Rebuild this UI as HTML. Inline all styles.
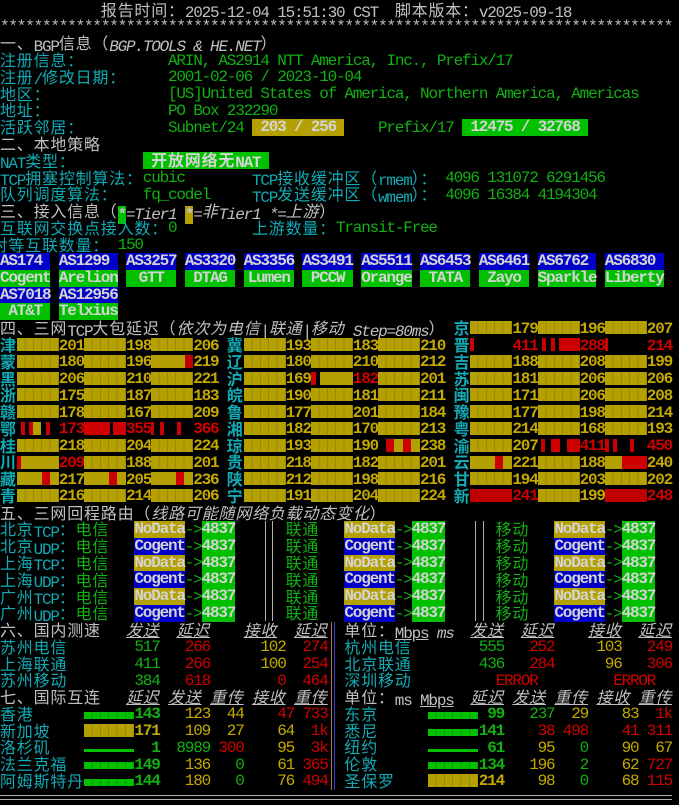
<!DOCTYPE html>
<html><head><meta charset="utf-8">
<style>
body{margin:0;background:#000;width:679px;height:805px;overflow:hidden;position:relative;font:16px/16.76px "Liberation Mono","Noto Sans CJK SC",monospace;letter-spacing:-1.2px;color:#c0c0c0}
i{position:absolute;font-style:normal;white-space:pre;left:calc(var(--c)*8.4px);top:calc(var(--r)*16.76px + 2.4px);height:16.76px;line-height:16.76px}
.k{font-family:"Noto Sans CJK SC","WenQuanYi Zen Hei",sans-serif;font-size:16px;letter-spacing:0.8px;line-height:16.76px}
span.k{position:relative;top:-1.5px}
i.k{position:absolute;top:calc(var(--r)*16.76px + 0.9px)}
.cy{color:#12aab4}.g{color:#12b012}.y{color:#c4aa00}.r{color:#d00000}.w{color:#c0c0c0}
.it{font-style:italic}
.b{font-weight:bold}
i.bx{font-weight:bold;color:#d4d4d4;text-align:center;width:calc(var(--w)*8.4px);top:calc(var(--r)*16.76px + 1.6px)}
.ol{background:#b4a000}.gn{background:#00c000}.bl{background:#0000c8}
i.bar{width:42px;height:13px;top:calc(var(--r)*16.76px + 3px)}
.yb{background:repeating-linear-gradient(90deg,#b4a000 0 7.4px,#9a8800 7.4px 8.4px)}
.rb{background:#c00000}
.gb{background:repeating-linear-gradient(90deg,#00c000 0 7.4px,#009a00 7.4px 8.4px)}
.ul{text-decoration:underline}
.vl{position:absolute;width:1px}
.n i{font-weight:bold}
</style></head><body>
<i style="--c:12;--r:0"><span class="k">报告时间：</span>2025-12-04 15:51:30 CST  <span class="k">脚本版本：</span>v2025-09-18</i>
<i style="--c:0;--r:1">********************************************************************************</i>
<i style="--c:0;--r:2"><span class="k">一、</span>BGP<span class="k">信息（</span><span class="it">BGP.TOOLS &amp; HE.NET</span><span class="k">）</span></i>
<i class="cy k" style="--c:0;--r:3">注册信息：</i><i class="g" style="--c:20;--r:3">ARIN, AS2914 NTT America, Inc., Prefix/17</i>
<i class="cy" style="--c:0;--r:4"><span class="k">注册</span>/<span class="k">修改日期：</span></i><i class="g" style="--c:20;--r:4">2001-02-06 / 2023-10-04</i>
<i class="cy k" style="--c:0;--r:5">地区：</i><i class="g" style="--c:20;--r:5">[US]United States of America, Northern America, Americas</i>
<i class="cy k" style="--c:0;--r:6">地址：</i><i class="g" style="--c:20;--r:6">PO Box 232290</i>
<i class="cy k" style="--c:0;--r:7">活跃邻居：</i><i class="g" style="--c:20;--r:7">Subnet/24</i>
<i class="bx ol" style="--c:30;--r:7;--w:11">203 / 256</i>
<i class="g" style="--c:45;--r:7">Prefix/17</i>
<i class="bx gn" style="--c:55;--r:7;--w:15">12475 / 32768</i>
<i class="k" style="--c:0;--r:8">二、本地策略</i>
<i class="cy" style="--c:0;--r:9">NAT<span class="k">类型：</span></i>
<i class="bx gn" style="--c:17;--r:9;--w:15"><span class="k">开放网络无</span>NAT</i>
<i class="cy" style="--c:0;--r:10">TCP<span class="k">拥塞控制算法：</span></i><i class="g" style="--c:17;--r:10">cubic</i>
<i class="cy" style="--c:30;--r:10">TCP<span class="k">接收缓冲区（</span>rmem<span class="k">）：</span></i><i class="g" style="--c:53;--r:10">4096 131072 6291456</i>
<i class="cy k" style="--c:0;--r:11">队列调度算法：</i><i class="g" style="--c:17;--r:11">fq_codel</i>
<i class="cy" style="--c:30;--r:11">TCP<span class="k">发送缓冲区（</span>wmem<span class="k">）：</span></i><i class="g" style="--c:53;--r:11">4096 16384 4194304</i>
<i style="--c:0;--r:12"><span class="k">三、接入信息（</span><span class="gn b">*</span><span class="it">=Tier1 </span><span class="ol b">*</span><span class="it">=<span class="k">非</span>Tier1 *=<span class="k">上游</span></span><span class="k">）</span></i>
<i class="cy k" style="--c:0;--r:13">互联网交换点接入数：</i><i class="g" style="--c:20;--r:13">0</i>
<i class="cy k" style="--c:30;--r:13">上游数量：</i><i class="g" style="--c:40;--r:13">Transit-Free</i>
<i class="cy k" style="--c:-1;--r:14">对等互联数量：</i><i class="g" style="--c:14;--r:14">150</i>

<i class="bx bl" style="--c:0;--r:15;--w:6;text-align:left">AS174</i><i class="bx gn" style="--c:0;--r:16;--w:6">Cogent</i>
<i class="bx bl" style="--c:7;--r:15;--w:7;text-align:left">AS1299</i><i class="bx gn" style="--c:7;--r:16;--w:7">Arelion</i>
<i class="bx bl" style="--c:15;--r:15;--w:6">AS3257</i><i class="bx gn" style="--c:15;--r:16;--w:6">GTT</i>
<i class="bx bl" style="--c:22;--r:15;--w:6">AS3320</i><i class="bx gn" style="--c:22;--r:16;--w:6">DTAG</i>
<i class="bx bl" style="--c:29;--r:15;--w:6">AS3356</i><i class="bx gn" style="--c:29;--r:16;--w:6">Lumen</i>
<i class="bx bl" style="--c:36;--r:15;--w:6">AS3491</i><i class="bx gn" style="--c:36;--r:16;--w:6">PCCW</i>
<i class="bx bl" style="--c:43;--r:15;--w:6">AS5511</i><i class="bx gn" style="--c:43;--r:16;--w:6">Orange</i>
<i class="bx bl" style="--c:50;--r:15;--w:6">AS6453</i><i class="bx gn" style="--c:50;--r:16;--w:6">TATA</i>
<i class="bx bl" style="--c:57;--r:15;--w:6">AS6461</i><i class="bx gn" style="--c:57;--r:16;--w:6">Zayo</i>
<i class="bx bl" style="--c:64;--r:15;--w:7;text-align:left">AS6762</i><i class="bx gn" style="--c:64;--r:16;--w:7">Sparkle</i>
<i class="bx bl" style="--c:72;--r:15;--w:7;text-align:left">AS6830</i><i class="bx gn" style="--c:72;--r:16;--w:7">Liberty</i>
<i class="bx bl" style="--c:0;--r:17;--w:6">AS7018</i><i class="bx gn" style="--c:0;--r:18;--w:6">AT&amp;T</i>
<i class="bx bl" style="--c:7;--r:17;--w:7">AS12956</i><i class="bx gn" style="--c:7;--r:18;--w:7">Telxius</i>

<i style="--c:0;--r:19"><span class="k">四、三网</span>TCP<span class="k">大包延迟（</span><span class="it"><span class="k">依次为电信</span>|<span class="k">联通</span>|<span class="k">移动</span> Step=80ms</span><span class="k">）</span></i>

<div class="n">
<i class="cy k" style="--c:0;--r:20">津</i><i class="bar yb" style="--c:2;--r:20"></i><i class="y" style="--c:7;--r:20">201</i><i class="bar yb" style="--c:10;--r:20"></i><i class="y" style="--c:15;--r:20">198</i><i class="bar yb" style="--c:18;--r:20"></i><i class="y" style="--c:23;--r:20">206</i>
<i class="cy k" style="--c:0;--r:21">蒙</i><i class="bar yb" style="--c:2;--r:21"></i><i class="y" style="--c:7;--r:21">180</i><i class="bar yb" style="--c:10;--r:21"></i><i class="y" style="--c:15;--r:21">196</i><i class="bar" style="--c:18;--r:21;background:linear-gradient(90deg,#b4a000 0 34px,#c00000 34px)"></i><i class="y" style="--c:23;--r:21">219</i>
<i class="cy k" style="--c:0;--r:22">黑</i><i class="bar yb" style="--c:2;--r:22"></i><i class="y" style="--c:7;--r:22">206</i><i class="bar yb" style="--c:10;--r:22"></i><i class="y" style="--c:15;--r:22">210</i><i class="bar yb" style="--c:18;--r:22"></i><i class="y" style="--c:23;--r:22">221</i>
<i class="cy k" style="--c:0;--r:23">浙</i><i class="bar yb" style="--c:2;--r:23"></i><i class="y" style="--c:7;--r:23">175</i><i class="bar yb" style="--c:10;--r:23"></i><i class="y" style="--c:15;--r:23">187</i><i class="bar yb" style="--c:18;--r:23"></i><i class="y" style="--c:23;--r:23">183</i>
<i class="cy k" style="--c:0;--r:24">赣</i><i class="bar yb" style="--c:2;--r:24"></i><i class="y" style="--c:7;--r:24">178</i><i class="bar yb" style="--c:10;--r:24"></i><i class="y" style="--c:15;--r:24">167</i><i class="bar yb" style="--c:18;--r:24"></i><i class="y" style="--c:23;--r:24">209</i>
<i class="cy k" style="--c:0;--r:25">鄂</i><i class="bar" style="--c:2;--r:25;background:linear-gradient(90deg,#000 0 4px,#c00 4px 8px,#000 8px 12px,#c00 12px 16px,#b4a000 16px 24px,#000 24px 29px,#c00 29px 33px,#000 33px)"></i><i class="r" style="--c:7;--r:25">173</i><i class="bar" style="--c:10;--r:25;background:linear-gradient(90deg,#c00 0 26px,#000 26px 29px,#c00 29px)"></i><i class="r" style="--c:15;--r:25">355</i><i class="bar" style="--c:18;--r:25;background:linear-gradient(90deg,#c00 0 3px,#000 3px 9px,#c00 9px 13px,#000 13px 26px,#c00 26px 30px,#000 30px)"></i><i class="r" style="--c:23;--r:25">366</i>
<i class="cy k" style="--c:0;--r:26">桂</i><i class="bar yb" style="--c:2;--r:26"></i><i class="y" style="--c:7;--r:26">218</i><i class="bar yb" style="--c:10;--r:26"></i><i class="y" style="--c:15;--r:26">204</i><i class="bar yb" style="--c:18;--r:26"></i><i class="y" style="--c:23;--r:26">224</i>
<i class="cy k" style="--c:0;--r:27">川</i><i class="bar" style="--c:2;--r:27;background:linear-gradient(90deg,#c00 0 4px,#b4a000 4px)"></i><i class="r" style="--c:7;--r:27">209</i><i class="bar yb" style="--c:10;--r:27"></i><i class="y" style="--c:15;--r:27">188</i><i class="bar yb" style="--c:18;--r:27"></i><i class="y" style="--c:23;--r:27">201</i>
<i class="cy k" style="--c:0;--r:28">藏</i><i class="bar" style="--c:2;--r:28;background:linear-gradient(90deg,#b4a000 0 25px,#c00 25px 33px,#b4a000 33px)"></i><i class="y" style="--c:7;--r:28">217</i><i class="bar" style="--c:10;--r:28;background:linear-gradient(90deg,#b4a000 0 25px,#c00 25px 33px,#b4a000 33px)"></i><i class="y" style="--c:15;--r:28">205</i><i class="bar" style="--c:18;--r:28;background:linear-gradient(90deg,#b4a000 0 25px,#c00 25px 33px,#b4a000 33px)"></i><i class="y" style="--c:23;--r:28">236</i>
<i class="cy k" style="--c:0;--r:29">青</i><i class="bar yb" style="--c:2;--r:29"></i><i class="y" style="--c:7;--r:29">216</i><i class="bar yb" style="--c:10;--r:29"></i><i class="y" style="--c:15;--r:29">214</i><i class="bar yb" style="--c:18;--r:29"></i><i class="y" style="--c:23;--r:29">206</i>

<i class="cy k" style="--c:27;--r:20">冀</i><i class="bar yb" style="--c:29;--r:20"></i><i class="y" style="--c:34;--r:20">193</i><i class="bar yb" style="--c:37;--r:20"></i><i class="y" style="--c:42;--r:20">183</i><i class="bar yb" style="--c:45;--r:20"></i><i class="y" style="--c:50;--r:20">210</i>
<i class="cy k" style="--c:27;--r:21">辽</i><i class="bar yb" style="--c:29;--r:21"></i><i class="y" style="--c:34;--r:21">180</i><i class="bar yb" style="--c:37;--r:21"></i><i class="y" style="--c:42;--r:21">210</i><i class="bar yb" style="--c:45;--r:21"></i><i class="y" style="--c:50;--r:21">212</i>
<i class="cy k" style="--c:27;--r:22">沪</i><i class="bar yb" style="--c:29;--r:22"></i><i class="y" style="--c:34;--r:22">169</i><i class="bar" style="--c:37;--r:22;background:linear-gradient(90deg,#c00 0 5px,#000 5px 9px,#b4a000 9px)"></i><i class="r" style="--c:42;--r:22">182</i><i class="bar yb" style="--c:45;--r:22"></i><i class="y" style="--c:50;--r:22">201</i>
<i class="cy k" style="--c:27;--r:23">皖</i><i class="bar yb" style="--c:29;--r:23"></i><i class="y" style="--c:34;--r:23">190</i><i class="bar yb" style="--c:37;--r:23"></i><i class="y" style="--c:42;--r:23">181</i><i class="bar yb" style="--c:45;--r:23"></i><i class="y" style="--c:50;--r:23">211</i>
<i class="cy k" style="--c:27;--r:24">鲁</i><i class="bar yb" style="--c:29;--r:24"></i><i class="y" style="--c:34;--r:24">177</i><i class="bar yb" style="--c:37;--r:24"></i><i class="y" style="--c:42;--r:24">201</i><i class="bar yb" style="--c:45;--r:24"></i><i class="y" style="--c:50;--r:24">184</i>
<i class="cy k" style="--c:27;--r:25">湘</i><i class="bar yb" style="--c:29;--r:25"></i><i class="y" style="--c:34;--r:25">182</i><i class="bar yb" style="--c:37;--r:25"></i><i class="y" style="--c:42;--r:25">170</i><i class="bar yb" style="--c:45;--r:25"></i><i class="y" style="--c:50;--r:25">213</i>
<i class="cy k" style="--c:27;--r:26">琼</i><i class="bar yb" style="--c:29;--r:26"></i><i class="y" style="--c:34;--r:26">193</i><i class="bar yb" style="--c:37;--r:26"></i><i class="y" style="--c:42;--r:26">190</i><i class="bar" style="--c:45;--r:26;background:linear-gradient(90deg,#000 0 8px,#c00 8px 16px,#b4a000 16px 25px,#c00 25px 33px,#b4a000 33px)"></i><i class="y" style="--c:50;--r:26">238</i>
<i class="cy k" style="--c:27;--r:27">贵</i><i class="bar yb" style="--c:29;--r:27"></i><i class="y" style="--c:34;--r:27">218</i><i class="bar yb" style="--c:37;--r:27"></i><i class="y" style="--c:42;--r:27">182</i><i class="bar yb" style="--c:45;--r:27"></i><i class="y" style="--c:50;--r:27">201</i>
<i class="cy k" style="--c:27;--r:28">陕</i><i class="bar yb" style="--c:29;--r:28"></i><i class="y" style="--c:34;--r:28">212</i><i class="bar yb" style="--c:37;--r:28"></i><i class="y" style="--c:42;--r:28">198</i><i class="bar yb" style="--c:45;--r:28"></i><i class="y" style="--c:50;--r:28">216</i>
<i class="cy k" style="--c:27;--r:29">宁</i><i class="bar yb" style="--c:29;--r:29"></i><i class="y" style="--c:34;--r:29">191</i><i class="bar yb" style="--c:37;--r:29"></i><i class="y" style="--c:42;--r:29">204</i><i class="bar yb" style="--c:45;--r:29"></i><i class="y" style="--c:50;--r:29">224</i>

<i class="cy k" style="--c:54;--r:19">京</i><i class="bar yb" style="--c:56;--r:19"></i><i class="y" style="--c:61;--r:19">179</i><i class="bar yb" style="--c:64;--r:19"></i><i class="y" style="--c:69;--r:19">196</i><i class="bar yb" style="--c:72;--r:19"></i><i class="y" style="--c:77;--r:19">207</i>
<i class="cy k" style="--c:54;--r:20">晋</i><i class="bar" style="--c:56;--r:20;background:linear-gradient(90deg,#c00 0 4px,#000 4px)"></i><i class="r" style="--c:61;--r:20">411</i><i class="bar" style="--c:64;--r:20;background:linear-gradient(90deg,#000 0 4px,#c00 4px 8px,#000 8px 13px,#c00 13px 17px,#000 17px 21px,#c00 21px)"></i><i class="r" style="--c:69;--r:20">288</i><i class="bar" style="--c:72;--r:20;background:linear-gradient(90deg,#c00 0 3px,#000 3px)"></i><i class="r" style="--c:77;--r:20">214</i>
<i class="cy k" style="--c:54;--r:21">吉</i><i class="bar yb" style="--c:56;--r:21"></i><i class="y" style="--c:61;--r:21">188</i><i class="bar yb" style="--c:64;--r:21"></i><i class="y" style="--c:69;--r:21">208</i><i class="bar yb" style="--c:72;--r:21"></i><i class="y" style="--c:77;--r:21">199</i>
<i class="cy k" style="--c:54;--r:22">苏</i><i class="bar yb" style="--c:56;--r:22"></i><i class="y" style="--c:61;--r:22">181</i><i class="bar yb" style="--c:64;--r:22"></i><i class="y" style="--c:69;--r:22">206</i><i class="bar yb" style="--c:72;--r:22"></i><i class="y" style="--c:77;--r:22">206</i>
<i class="cy k" style="--c:54;--r:23">闽</i><i class="bar yb" style="--c:56;--r:23"></i><i class="y" style="--c:61;--r:23">171</i><i class="bar yb" style="--c:64;--r:23"></i><i class="y" style="--c:69;--r:23">206</i><i class="bar yb" style="--c:72;--r:23"></i><i class="y" style="--c:77;--r:23">208</i>
<i class="cy k" style="--c:54;--r:24">豫</i><i class="bar yb" style="--c:56;--r:24"></i><i class="y" style="--c:61;--r:24">177</i><i class="bar yb" style="--c:64;--r:24"></i><i class="y" style="--c:69;--r:24">198</i><i class="bar yb" style="--c:72;--r:24"></i><i class="y" style="--c:77;--r:24">214</i>
<i class="cy k" style="--c:54;--r:25">粤</i><i class="bar yb" style="--c:56;--r:25"></i><i class="y" style="--c:61;--r:25">214</i><i class="bar yb" style="--c:64;--r:25"></i><i class="y" style="--c:69;--r:25">168</i><i class="bar yb" style="--c:72;--r:25"></i><i class="y" style="--c:77;--r:25">193</i>
<i class="cy k" style="--c:54;--r:26">渝</i><i class="bar yb" style="--c:56;--r:26"></i><i class="y" style="--c:61;--r:26">207</i><i class="bar" style="--c:64;--r:26;background:linear-gradient(90deg,#000 0 3px,#c00 3px 7px,#000 7px 13px,#c00 13px 22px,#000 22px 29px,#c00 29px)"></i><i class="r" style="--c:69;--r:26">411</i><i class="bar" style="--c:72;--r:26;background:linear-gradient(90deg,#c00 0 4px,#000 4px 8px,#c00 8px 12px,#000 12px 25px,#c00 25px 29px,#000 29px)"></i><i class="r" style="--c:77;--r:26">450</i>
<i class="cy k" style="--c:54;--r:27">云</i><i class="bar" style="--c:56;--r:27;background:linear-gradient(90deg,#b4a000 0 25px,#c00 25px 33px,#b4a000 33px)"></i><i class="y" style="--c:61;--r:27">221</i><i class="bar yb" style="--c:64;--r:27"></i><i class="y" style="--c:69;--r:27">188</i><i class="bar" style="--c:72;--r:27;background:linear-gradient(90deg,#b4a000 0 17px,#c00 17px)"></i><i class="y" style="--c:77;--r:27">240</i>
<i class="cy k" style="--c:54;--r:28">甘</i><i class="bar yb" style="--c:56;--r:28"></i><i class="y" style="--c:61;--r:28">194</i><i class="bar yb" style="--c:64;--r:28"></i><i class="y" style="--c:69;--r:28">203</i><i class="bar yb" style="--c:72;--r:28"></i><i class="y" style="--c:77;--r:28">202</i>
<i class="cy k" style="--c:54;--r:29">新</i><i class="bar rb" style="--c:56;--r:29"></i><i class="r" style="--c:61;--r:29">241</i><i class="bar yb" style="--c:64;--r:29"></i><i class="y" style="--c:69;--r:29">199</i><i class="bar rb" style="--c:72;--r:29"></i><i class="r" style="--c:77;--r:29">248</i>
</div>

<i style="--c:0;--r:30"><span class="k">五、三网回程路由（</span><span class="it k">线路可能随网络负载动态变化</span><span class="k">）</span></i>

<i class="cy" style="--c:0;--r:31"><span class="k">北京</span>TCP<span class="k">：</span></i>
<i class="cy" style="--c:0;--r:32"><span class="k">北京</span>UDP<span class="k">：</span></i>
<i class="cy" style="--c:0;--r:33"><span class="k">上海</span>TCP<span class="k">：</span></i>
<i class="cy" style="--c:0;--r:34"><span class="k">上海</span>UDP<span class="k">：</span></i>
<i class="cy" style="--c:0;--r:35"><span class="k">广州</span>TCP<span class="k">：</span></i>
<i class="cy" style="--c:0;--r:36"><span class="k">广州</span>UDP<span class="k">：</span></i>
<i class="g k" style="--c:9;--r:31">电信</i><i class="g k" style="--c:9;--r:32">电信</i><i class="g k" style="--c:9;--r:33">电信</i><i class="g k" style="--c:9;--r:34">电信</i><i class="g k" style="--c:9;--r:35">电信</i><i class="g k" style="--c:9;--r:36">电信</i>
<i class="g k" style="--c:34;--r:31">联通</i><i class="g k" style="--c:34;--r:32">联通</i><i class="g k" style="--c:34;--r:33">联通</i><i class="g k" style="--c:34;--r:34">联通</i><i class="g k" style="--c:34;--r:35">联通</i><i class="g k" style="--c:34;--r:36">联通</i>
<i class="g k" style="--c:59;--r:31">移动</i><i class="g k" style="--c:59;--r:32">移动</i><i class="g k" style="--c:59;--r:33">移动</i><i class="g k" style="--c:59;--r:34">移动</i><i class="g k" style="--c:59;--r:35">移动</i><i class="g k" style="--c:59;--r:36">移动</i>

<i class="bx ol" style="--c:16;--r:31;--w:6">NoData</i><i class="bx bl" style="--c:16;--r:32;--w:6">Cogent</i><i class="bx ol" style="--c:16;--r:33;--w:6">NoData</i><i class="bx bl" style="--c:16;--r:34;--w:6">Cogent</i><i class="bx ol" style="--c:16;--r:35;--w:6">NoData</i><i class="bx bl" style="--c:16;--r:36;--w:6">Cogent</i>
<i class="bx ol" style="--c:41;--r:31;--w:6">NoData</i><i class="bx bl" style="--c:41;--r:32;--w:6">Cogent</i><i class="bx ol" style="--c:41;--r:33;--w:6">NoData</i><i class="bx bl" style="--c:41;--r:34;--w:6">Cogent</i><i class="bx ol" style="--c:41;--r:35;--w:6">NoData</i><i class="bx bl" style="--c:41;--r:36;--w:6">Cogent</i>
<i class="bx ol" style="--c:66;--r:31;--w:6">NoData</i><i class="bx bl" style="--c:66;--r:32;--w:6">Cogent</i><i class="bx ol" style="--c:66;--r:33;--w:6">NoData</i><i class="bx bl" style="--c:66;--r:34;--w:6">Cogent</i><i class="bx ol" style="--c:66;--r:35;--w:6">NoData</i><i class="bx bl" style="--c:66;--r:36;--w:6">Cogent</i>

<i class="g" style="--c:22;--r:31">-&gt;</i><i class="g" style="--c:22;--r:32">-&gt;</i><i class="g" style="--c:22;--r:33">-&gt;</i><i class="g" style="--c:22;--r:34">-&gt;</i><i class="g" style="--c:22;--r:35">-&gt;</i><i class="g" style="--c:22;--r:36">-&gt;</i>
<i class="g" style="--c:47;--r:31">-&gt;</i><i class="g" style="--c:47;--r:32">-&gt;</i><i class="g" style="--c:47;--r:33">-&gt;</i><i class="g" style="--c:47;--r:34">-&gt;</i><i class="g" style="--c:47;--r:35">-&gt;</i><i class="g" style="--c:47;--r:36">-&gt;</i>
<i class="g" style="--c:72;--r:31">-&gt;</i><i class="g" style="--c:72;--r:32">-&gt;</i><i class="g" style="--c:72;--r:33">-&gt;</i><i class="g" style="--c:72;--r:34">-&gt;</i><i class="g" style="--c:72;--r:35">-&gt;</i><i class="g" style="--c:72;--r:36">-&gt;</i>

<i class="bx gn" style="--c:24;--r:31;--w:4">4837</i><i class="bx gn" style="--c:24;--r:32;--w:4">4837</i><i class="bx gn" style="--c:24;--r:33;--w:4">4837</i><i class="bx gn" style="--c:24;--r:34;--w:4">4837</i><i class="bx gn" style="--c:24;--r:35;--w:4">4837</i><i class="bx gn" style="--c:24;--r:36;--w:4">4837</i>
<i class="bx gn" style="--c:49;--r:31;--w:4">4837</i><i class="bx gn" style="--c:49;--r:32;--w:4">4837</i><i class="bx gn" style="--c:49;--r:33;--w:4">4837</i><i class="bx gn" style="--c:49;--r:34;--w:4">4837</i><i class="bx gn" style="--c:49;--r:35;--w:4">4837</i><i class="bx gn" style="--c:49;--r:36;--w:4">4837</i>
<i class="bx gn" style="--c:74;--r:31;--w:4">4837</i><i class="bx gn" style="--c:74;--r:32;--w:4">4837</i><i class="bx gn" style="--c:74;--r:33;--w:4">4837</i><i class="bx gn" style="--c:74;--r:34;--w:4">4837</i><i class="bx gn" style="--c:74;--r:35;--w:4">4837</i><i class="bx gn" style="--c:74;--r:36;--w:4">4837</i>

<div class="vl" style="left:265px;top:521px;height:100px;background:#b0b0b0"></div>
<div class="vl" style="left:272px;top:521px;height:100px;background:#b0b0b0"></div>
<div class="vl" style="left:475px;top:521px;height:100px;background:#b0b0b0"></div>
<div class="vl" style="left:483px;top:521px;height:100px;background:#b0b0b0"></div>

<i class="k" style="--c:0;--r:37">六、国内测速</i>
<i class="k it ul" style="--c:15;--r:37">发送</i><i class="k it ul" style="--c:21;--r:37">延迟</i><i class="k it ul" style="--c:29;--r:37">接收</i><i class="k it ul" style="--c:35;--r:37">延迟</i>
<i style="--c:41;--r:37"><span class="k">单位：</span><span class="ul">Mbps</span> <span class="it">ms</span></i>
<i class="k it ul" style="--c:56;--r:37">发送</i><i class="k it ul" style="--c:62;--r:37">延迟</i><i class="k it ul" style="--c:70;--r:37">接收</i><i class="k it ul" style="--c:76;--r:37">延迟</i>
<i class="cy k" style="--c:0;--r:38">苏州电信</i><i class="g" style="--c:16;--r:38">517</i><i class="r" style="--c:22;--r:38">266</i><i class="y" style="--c:31;--r:38">102</i><i class="r" style="--c:36;--r:38">274</i>
<i class="cy k" style="--c:0;--r:39">上海联通</i><i class="g" style="--c:16;--r:39">411</i><i class="r" style="--c:22;--r:39">266</i><i class="y" style="--c:31;--r:39">100</i><i class="r" style="--c:36;--r:39">254</i>
<i class="cy k" style="--c:0;--r:40">苏州移动</i><i class="g" style="--c:16;--r:40">384</i><i class="r" style="--c:22;--r:40">618</i><i class="r" style="--c:33;--r:40">0</i><i class="r" style="--c:36;--r:40">464</i>
<i class="cy k" style="--c:41;--r:38">杭州电信</i><i class="g" style="--c:57;--r:38">555</i><i class="r" style="--c:63;--r:38">252</i><i class="y" style="--c:71;--r:38">103</i><i class="r" style="--c:77;--r:38">249</i>
<i class="cy k" style="--c:41;--r:39">北京联通</i><i class="g" style="--c:57;--r:39">436</i><i class="r" style="--c:63;--r:39">284</i><i class="y" style="--c:72;--r:39">96</i><i class="r" style="--c:77;--r:39">306</i>
<i class="cy k" style="--c:41;--r:40">深圳移动</i><i class="r" style="--c:59;--r:40">ERROR</i><i class="r" style="--c:73;--r:40">ERROR</i>

<i class="k" style="--c:0;--r:41">七、国际互连</i>
<i class="k it ul" style="--c:15;--r:41">延迟</i><i class="k it ul" style="--c:20;--r:41">发送</i><i class="k it ul" style="--c:25;--r:41">重传</i><i class="k it ul" style="--c:30;--r:41">接收</i><i class="k it ul" style="--c:35;--r:41">重传</i>
<i style="--c:41;--r:41"><span class="k">单位：</span>ms <span class="ul">Mbps</span></i>
<i class="k it ul" style="--c:56;--r:41">延迟</i><i class="k it ul" style="--c:61;--r:41">发送</i><i class="k it ul" style="--c:66;--r:41">重传</i><i class="k it ul" style="--c:71;--r:41">接收</i><i class="k it ul" style="--c:76;--r:41">重传</i>

<i class="cy k" style="--c:0;--r:42">香港</i><i class="bar gb" style="--c:10;--r:42;width:50px;height:7px;margin-top:5px"></i><i class="g b" style="--c:16;--r:42">143</i><i class="y" style="--c:22;--r:42">123</i><i class="y" style="--c:27;--r:42">44</i><i class="r" style="--c:33;--r:42">47</i><i class="r" style="--c:36;--r:42">733</i>
<i class="cy k" style="--c:0;--r:43">新加坡</i><i class="bar yb" style="--c:10;--r:43;width:50px"></i><i class="y b" style="--c:16;--r:43">171</i><i class="y" style="--c:22;--r:43">109</i><i class="y" style="--c:27;--r:43">27</i><i class="y" style="--c:33;--r:43">64</i><i class="r" style="--c:37;--r:43">1k</i>
<i class="cy k" style="--c:0;--r:44">洛杉矶</i><i class="bar" style="--c:10;--r:44;width:50px;height:3px;margin-top:9px;background:#00c000"></i><i class="g b" style="--c:18;--r:44">1</i><i class="g" style="--c:21;--r:44">8989</i><i class="r" style="--c:26;--r:44">300</i><i class="y" style="--c:33;--r:44">95</i><i class="r" style="--c:37;--r:44">3k</i>
<i class="cy k" style="--c:0;--r:45">法兰克福</i><i class="bar gb" style="--c:10;--r:45;width:50px;height:7px;margin-top:5px"></i><i class="g b" style="--c:16;--r:45">149</i><i class="y" style="--c:22;--r:45">136</i><i class="g" style="--c:28;--r:45">0</i><i class="y" style="--c:33;--r:45">61</i><i class="r" style="--c:36;--r:45">365</i>
<i class="cy k" style="--c:0;--r:46">阿姆斯特丹</i><i class="bar gb" style="--c:10;--r:46;width:50px;height:7px;margin-top:5px"></i><i class="g b" style="--c:16;--r:46">144</i><i class="y" style="--c:22;--r:46">180</i><i class="g" style="--c:28;--r:46">0</i><i class="y" style="--c:33;--r:46">76</i><i class="r" style="--c:36;--r:46">494</i>

<i class="cy k" style="--c:41;--r:42">东京</i><i class="bar gb" style="--c:51;--r:42;width:50px;height:7px;margin-top:5px"></i><i class="g b" style="--c:58;--r:42">99</i><i class="g" style="--c:63;--r:42">237</i><i class="y" style="--c:68;--r:42">29</i><i class="y" style="--c:74;--r:42">83</i><i class="r" style="--c:78;--r:42">1k</i>
<i class="cy k" style="--c:41;--r:43">悉尼</i><i class="bar gb" style="--c:51;--r:43;width:50px;height:7px;margin-top:5px"></i><i class="g b" style="--c:57;--r:43">141</i><i class="r" style="--c:64;--r:43">38</i><i class="r" style="--c:67;--r:43">498</i><i class="r" style="--c:74;--r:43">41</i><i class="r" style="--c:77;--r:43">311</i>
<i class="cy k" style="--c:41;--r:44">纽约</i><i class="bar" style="--c:51;--r:44;width:50px;height:3px;margin-top:9px;background:#00c000"></i><i class="g b" style="--c:58;--r:44">61</i><i class="y" style="--c:64;--r:44">95</i><i class="g" style="--c:69;--r:44">0</i><i class="y" style="--c:74;--r:44">90</i><i class="y" style="--c:78;--r:44">67</i>
<i class="cy k" style="--c:41;--r:45">伦敦</i><i class="bar gb" style="--c:51;--r:45;width:50px;height:7px;margin-top:5px"></i><i class="g b" style="--c:57;--r:45">134</i><i class="y" style="--c:63;--r:45">196</i><i class="g" style="--c:69;--r:45">2</i><i class="y" style="--c:74;--r:45">62</i><i class="r" style="--c:77;--r:45">727</i>
<i class="cy k" style="--c:41;--r:46">圣保罗</i><i class="bar yb" style="--c:51;--r:46;width:50px"></i><i class="y b" style="--c:57;--r:46">214</i><i class="y" style="--c:64;--r:46">98</i><i class="g" style="--c:69;--r:46">0</i><i class="y" style="--c:74;--r:46">68</i><i class="r" style="--c:77;--r:46">115</i>

<div class="vl" style="left:331px;top:622px;height:168px;background:#b07040"></div>
<div class="vl" style="left:334px;top:622px;height:168px;background:#4040d0"></div>
<div style="position:absolute;left:0;top:795px;width:672px;height:1px;background:#b0b0b0"></div>
<div style="position:absolute;left:0;top:799px;width:672px;height:1px;background:#b0b0b0"></div>
</body></html>
